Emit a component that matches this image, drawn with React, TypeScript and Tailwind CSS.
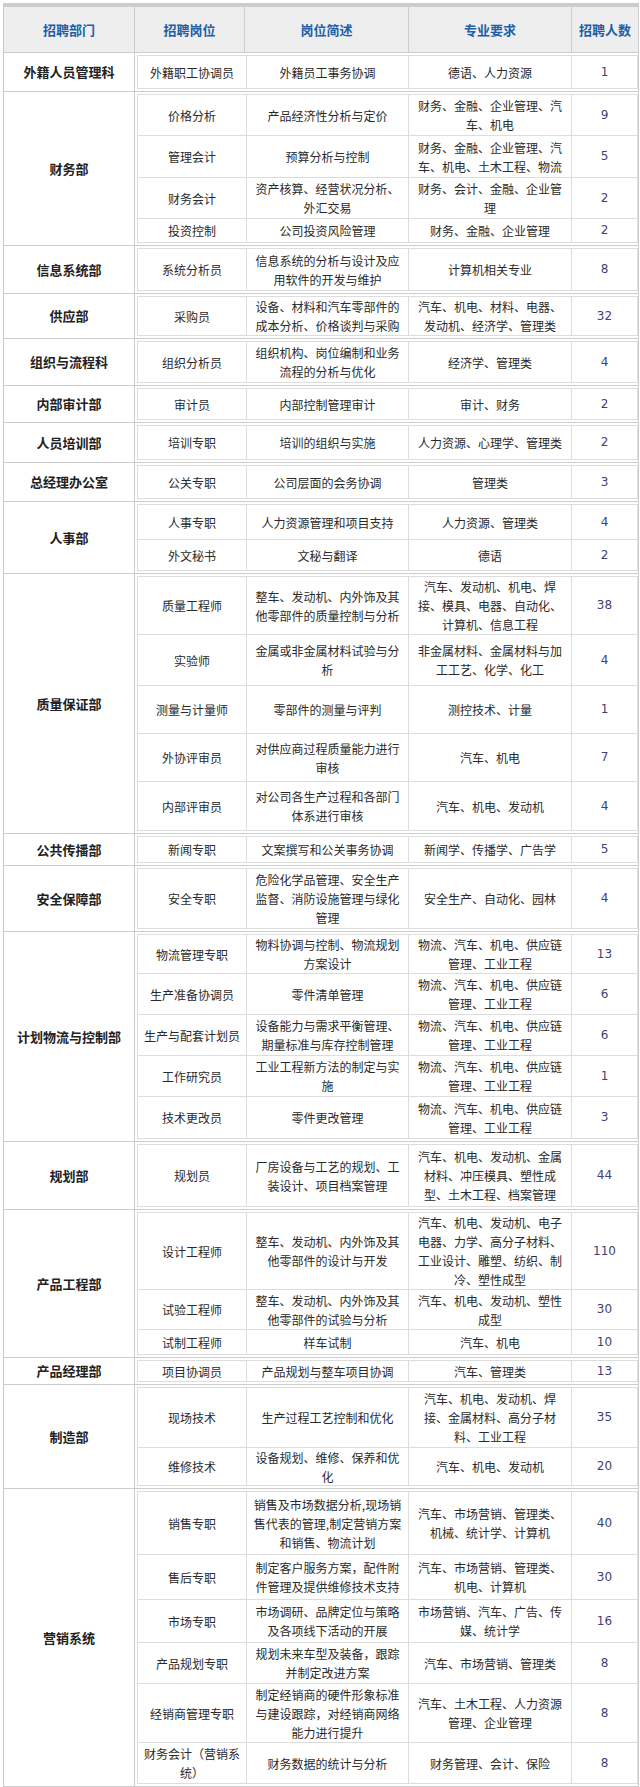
import React from "react";

type Row = { pos: string; desc: string; major: string; count: string; h: string };
type Dept = { name: string; rows: Row[] };

const data: Dept[] = [
  { name: "外籍人员管理科", rows: [{ pos: "外籍职工协调员", desc: "外籍员工事务协调", major: "德语、人力资源", count: "1", h: "h-[32px]" }] },
  {
    name: "财务部",
    rows: [
      { pos: "价格分析", desc: "产品经济性分析与定价", major: "财务、金融、企业管理、汽车、机电", count: "9", h: "h-[40px]" },
      { pos: "管理会计", desc: "预算分析与控制", major: "财务、金融、企业管理、汽车、机电、土木工程、物流", count: "5", h: "h-[41px]" },
      { pos: "财务会计", desc: "资产核算、经营状况分析、外汇交易", major: "财务、会计、金融、企业管理", count: "2", h: "h-[40px]" },
      { pos: "投资控制", desc: "公司投资风险管理", major: "财务、金融、企业管理", count: "2", h: "h-[23px]" },
    ],
  },
  { name: "信息系统部", rows: [{ pos: "系统分析员", desc: "信息系统的分析与设计及应用软件的开发与维护", major: "计算机相关专业", count: "8", h: "h-[41px]" }] },
  { name: "供应部", rows: [{ pos: "采购员", desc: "设备、材料和汽车零部件的成本分析、价格谈判与采购", major: "汽车、机电、材料、电器、发动机、经济学、管理类", count: "32", h: "h-[38px]" }] },
  { name: "组织与流程科", rows: [{ pos: "组织分析员", desc: "组织机构、岗位编制和业务流程的分析与优化", major: "经济学、管理类", count: "4", h: "h-[40px]" }] },
  { name: "内部审计部", rows: [{ pos: "审计员", desc: "内部控制管理审计", major: "审计、财务", count: "2", h: "h-[30px]" }] },
  { name: "人员培训部", rows: [{ pos: "培训专职", desc: "培训的组织与实施", major: "人力资源、心理学、管理类", count: "2", h: "h-[33px]" }] },
  { name: "总经理办公室", rows: [{ pos: "公关专职", desc: "公司层面的会务协调", major: "管理类", count: "3", h: "h-[32px]" }] },
  {
    name: "人事部",
    rows: [
      { pos: "人事专职", desc: "人力资源管理和项目支持", major: "人力资源、管理类", count: "4", h: "h-[34px]" },
      { pos: "外文秘书", desc: "文秘与翻译", major: "德语", count: "2", h: "h-[30px]" },
    ],
  },
  {
    name: "质量保证部",
    rows: [
      { pos: "质量工程师", desc: "整车、发动机、内外饰及其他零部件的质量控制与分析", major: "汽车、发动机、机电、焊接、模具、电器、自动化、计算机、信息工程", count: "38", h: "h-[57px]" },
      { pos: "实验师", desc: "金属或非金属材料试验与分析", major: "非金属材料、金属材料与加工工艺、化学、化工", count: "4", h: "h-[50px]" },
      { pos: "测量与计量师", desc: "零部件的测量与评判", major: "测控技术、计量", count: "1", h: "h-[47px]" },
      { pos: "外协评审员", desc: "对供应商过程质量能力进行审核", major: "汽车、机电", count: "7", h: "h-[47px]" },
      { pos: "内部评审员", desc: "对公司各生产过程和各部门体系进行审核", major: "汽车、机电、发动机", count: "4", h: "h-[48px]" },
    ],
  },
  { name: "公共传播部", rows: [{ pos: "新闻专职", desc: "文案撰写和公关事务协调", major: "新闻学、传播学、广告学", count: "5", h: "h-[25px]" }] },
  { name: "安全保障部", rows: [{ pos: "安全专职", desc: "危险化学品管理、安全生产监督、消防设施管理与绿化管理", major: "安全生产、自动化、园林", count: "4", h: "h-[59px]" }] },
  {
    name: "计划物流与控制部",
    rows: [
      { pos: "物流管理专职", desc: "物料协调与控制、物流规划方案设计", major: "物流、汽车、机电、供应链管理、工业工程", count: "13", h: "h-[38px]" },
      { pos: "生产准备协调员", desc: "零件清单管理", major: "物流、汽车、机电、供应链管理、工业工程", count: "6", h: "h-[40px]" },
      { pos: "生产与配套计划员", desc: "设备能力与需求平衡管理、期量标准与库存控制管理", major: "物流、汽车、机电、供应链管理、工业工程", count: "6", h: "h-[40px]" },
      { pos: "工作研究员", desc: "工业工程新方法的制定与实施", major: "物流、汽车、机电、供应链管理、工业工程", count: "1", h: "h-[40px]" },
      { pos: "技术更改员", desc: "零件更改管理", major: "物流、汽车、机电、供应链管理、工业工程", count: "3", h: "h-[41px]" },
    ],
  },
  { name: "规划部", rows: [{ pos: "规划员", desc: "厂房设备与工艺的规划、工装设计、项目档案管理", major: "汽车、机电、发动机、金属材料、冲压模具、塑性成型、土木工程、档案管理", count: "44", h: "h-[61px]" }] },
  {
    name: "产品工程部",
    rows: [
      { pos: "设计工程师", desc: "整车、发动机、内外饰及其他零部件的设计与开发", major: "汽车、机电、发动机、电子电器、力学、高分子材料、工业设计、雕塑、纺织、制冷、塑性成型", count: "110", h: "h-[76px]" },
      { pos: "试验工程师", desc: "整车、发动机、内外饰及其他零部件的试验与分析", major: "汽车、机电、发动机、塑性成型", count: "30", h: "h-[39px]" },
      { pos: "试制工程师", desc: "样车试制", major: "汽车、机电", count: "10", h: "h-[24px]" },
    ],
  },
  { name: "产品经理部", rows: [{ pos: "项目协调员", desc: "产品规划与整车项目协调", major: "汽车、管理类", count: "13", h: "h-[20px]" }] },
  {
    name: "制造部",
    rows: [
      { pos: "现场技术", desc: "生产过程工艺控制和优化", major: "汽车、机电、发动机、焊接、金属材料、高分子材料、工业工程", count: "35", h: "h-[59px]" },
      { pos: "维修技术", desc: "设备规划、维修、保养和优化", major: "汽车、机电、发动机", count: "20", h: "h-[37px]" },
    ],
  },
  {
    name: "营销系统",
    rows: [
      { pos: "销售专职", desc: "销售及市场数据分析,现场销售代表的管理,制定营销方案和销售、物流计划", major: "汽车、市场营销、管理类、机械、统计学、计算机", count: "40", h: "h-[62px]" },
      { pos: "售后专职", desc: "制定客户服务方案，配件附件管理及提供维修技术支持", major: "汽车、市场营销、管理类、机电、计算机", count: "30", h: "h-[44px]" },
      { pos: "市场专职", desc: "市场调研、品牌定位与策略及各项线下活动的开展", major: "市场营销、汽车、广告、传媒、统计学", count: "16", h: "h-[42px]" },
      { pos: "产品规划专职", desc: "规划未来车型及装备，跟踪并制定改进方案", major: "汽车、市场营销、管理类", count: "8", h: "h-[40px]" },
      { pos: "经销商管理专职", desc: "制定经销商的硬件形象标准与建设跟踪，对经销商网络能力进行提升", major: "汽车、土木工程、人力资源管理、企业管理", count: "8", h: "h-[58px]" },
      { pos: "财务会计（营销系统）", desc: "财务数据的统计与分析", major: "财务管理、会计、保险", count: "8", h: "h-[40px]" },
    ],
  },
];

const cell = "flex items-center justify-center text-center px-[4px] leading-[19px]";

function SubRow({ r, first }: { r: Row; first: boolean }) {
  return (
    <div className={`flex ${first ? "" : "border-t border-[#dddddd]"}`}>
      <div className={`${cell} ${r.h} w-[109px] border-r border-[#dddddd]`}>{r.pos}</div>
      <div className={`${cell} ${r.h} w-[162px] border-r border-[#dddddd]`}>{r.desc}</div>
      <div className={`${cell} ${r.h} w-[163px] border-r border-[#dddddd]`}>{r.major}</div>
      <div className={`${cell} ${r.h} flex-1 [font-family:'DejaVu_Sans',sans-serif] text-[12px] text-[#3f3f78]`}>{r.count}</div>
    </div>
  );
}

export default function App() {
  return (
    <div className="min-h-[1787px] bg-white pt-[3px] pl-[3px] [font-family:'Noto_Sans_CJK_SC',sans-serif] text-[12px] text-[#2a2a2a]">
      <div className="w-[636px] border-t-4 border-t-[#cccccc] border-x border-b border-x-[#cccccc] border-b-[#cccccc]">
        <div className="flex h-[46px] bg-[#eeeeee] border-b border-[#cccccc] text-[13px] font-bold text-[#1d5fa8]">
          <div className="w-[131px] border-r border-[#cccccc] flex items-center justify-center">招聘部门</div>
          <div className="w-[110px] border-r border-[#cccccc] flex items-center justify-center">招聘岗位</div>
          <div className="w-[164px] border-r border-[#cccccc] flex items-center justify-center">岗位简述</div>
          <div className="w-[163px] border-r border-[#cccccc] flex items-center justify-center">专业要求</div>
          <div className="flex-1 flex items-center justify-center">招聘人数</div>
        </div>
        {data.map((d, i) => (
          <div key={d.name} className={`flex ${i < data.length - 1 ? "border-b border-[#cccccc]" : ""}`}>
            <div className="w-[131px] border-r border-[#cccccc] flex items-center justify-center text-[13px] font-bold text-[#222222]">
              {d.name}
            </div>
            <div className="flex-1 pl-[2px] py-[2px]">
              <div className="border border-[#dddddd]">
                {d.rows.map((r, j) => (
                  <SubRow key={r.pos} r={r} first={j === 0} />
                ))}
              </div>
            </div>
          </div>
        ))}
      </div>
    </div>
  );
}
